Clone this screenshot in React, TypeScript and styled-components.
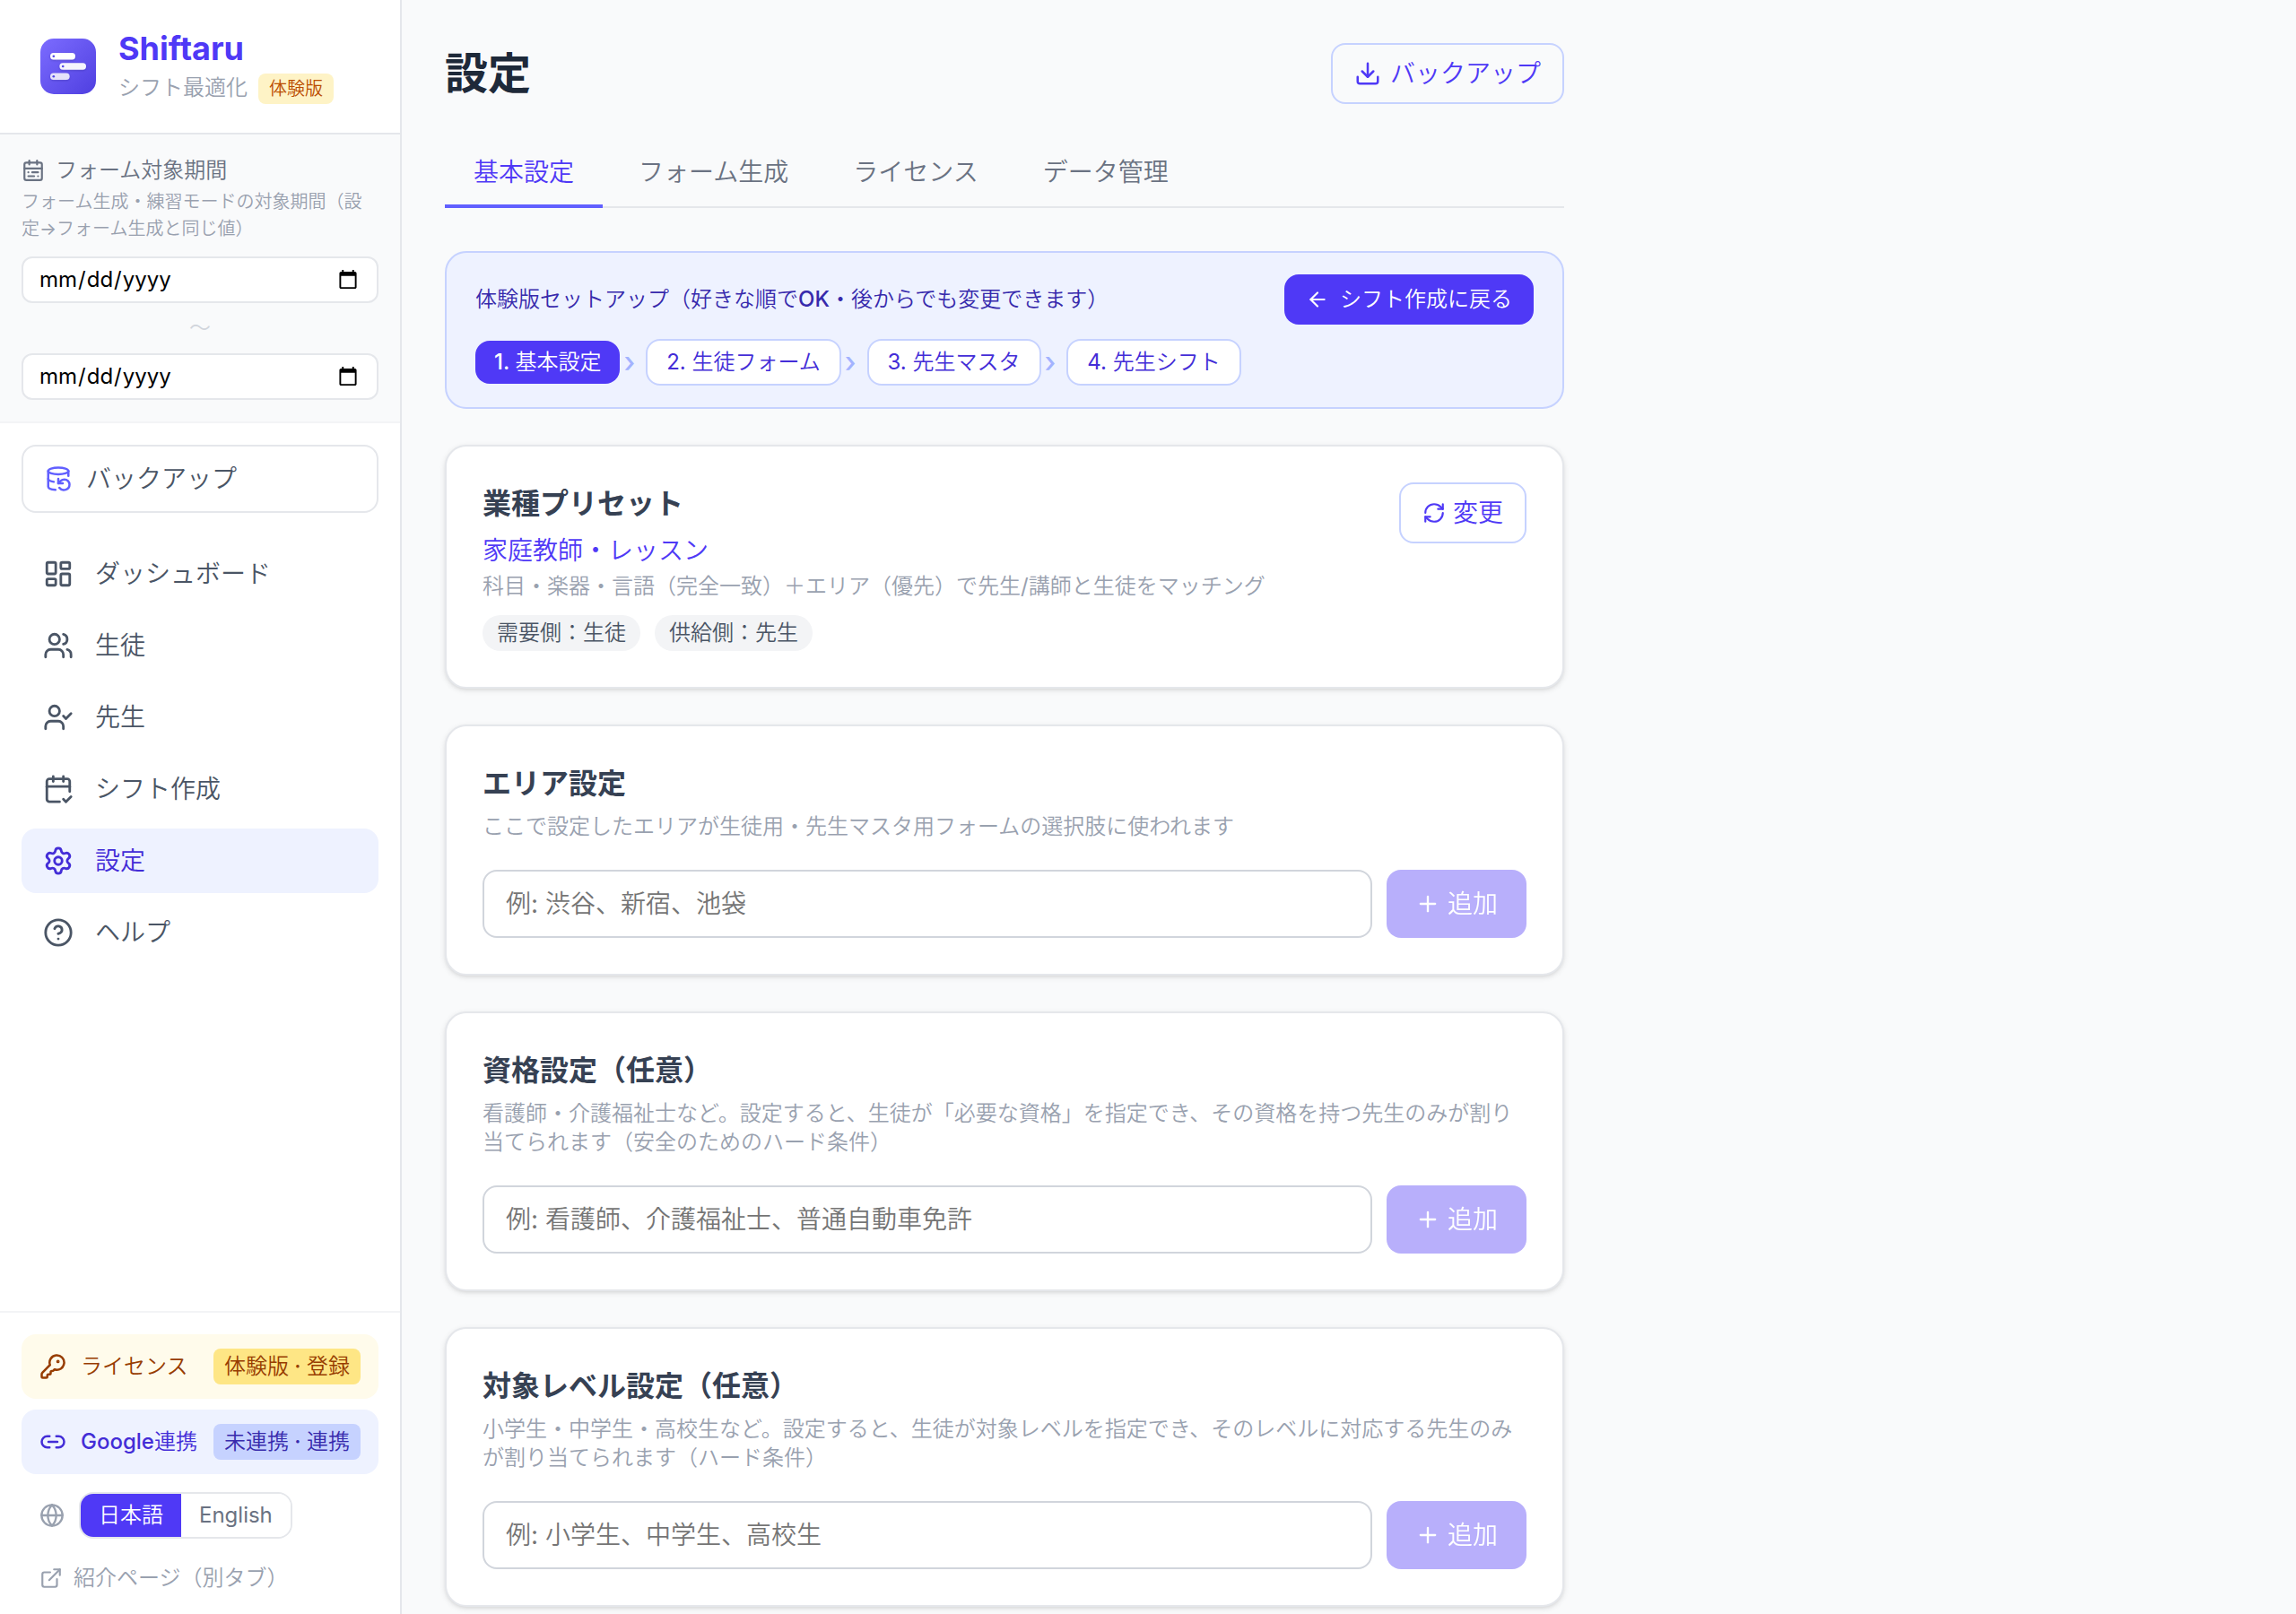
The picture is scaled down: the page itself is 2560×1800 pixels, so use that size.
import React from "react";
import styled, { createGlobalStyle, css } from "styled-components";
import {
  ArrowLeft,
  CalendarCheck2,
  CalendarRange,
  CircleHelp,
  DatabaseBackup,
  Download,
  ExternalLink,
  Globe,
  KeyRound,
  LayoutDashboard,
  Link2,
  Plus,
  RefreshCw,
  Settings,
} from "lucide-react";

const c = {
  page: "#f9fafb",
  line: "#e5e7eb",
  lineSoft: "#f3f4f6",
  lineInput: "#d1d5dc",
  faint: "#99a1af",
  muted: "#6a7282",
  body: "#4a5565",
  title: "#364153",
  heading: "#1e2939",
  indigo50: "#eef2ff",
  indigo200: "#c6d2ff",
  indigo300: "#a3b3ff",
  indigo500: "#615fff",
  indigo600: "#4f39f6",
  indigo700: "#432dd7",
  indigo800: "#372aac",
};

const fontText = `Inter, "Noto Sans CJK JP DemiLight", "Noto Sans CJK JP", sans-serif`;
const fontTitle = `Inter, "Noto Sans CJK JP", sans-serif`;

const Global = createGlobalStyle`
  *, *::before, *::after { box-sizing: border-box; }
  body {
    margin: 0;
    background: ${c.page};
    color: ${c.heading};
    font-family: ${fontText};
    font-size: 28px;
    line-height: 40px;
    -webkit-font-smoothing: antialiased;
  }
  h1, h2, p, ol, ul { margin: 0; padding: 0; }
  ol, ul { list-style: none; }
  button, input { font: inherit; margin: 0; }
  button { cursor: pointer; }
  a { color: inherit; text-decoration: none; }
  svg { display: block; flex: none; }
`;

const Shell = styled.div`
  display: flex;
  align-items: flex-start;
  min-height: 100vh;
`;

/* ---------- sidebar ---------- */

const Sidebar = styled.aside`
  position: sticky;
  top: 0;
  display: flex;
  flex-direction: column;
  flex: none;
  width: 448px;
  height: 100vh;
  background: #fff;
  border-right: 2px solid ${c.line};
`;

const Brand = styled.header`
  display: flex;
  align-items: center;
  gap: 20px;
  padding: 30px 40px;
  border-bottom: 2px solid ${c.line};
`;

const BrandName = styled.p`
  color: ${c.indigo600};
  font-size: 36px;
  font-weight: 700;
  line-height: 48px;
`;

const BrandSub = styled.p`
  display: flex;
  align-items: baseline;
  gap: 12px;
  color: ${c.faint};
  font-size: 24px;
  line-height: 40px;
`;

const TrialBadge = styled.span`
  padding: 2px 12px;
  border-radius: 8px;
  background: #fef3c6;
  color: #bb4d00;
  font-size: 20px;
  font-weight: 500;
  line-height: 30px;
`;

const Period = styled.section`
  padding: 24px;
  background: ${c.page};
  border-bottom: 2px solid ${c.lineSoft};
  font-size: 24px;
  line-height: 32px;
`;

const PeriodTitle = styled.p`
  display: flex;
  align-items: center;
  gap: 12px;
  color: ${c.muted};
  font-weight: 500;
`;

const PeriodNote = styled.p`
  margin: 4px 0 16px;
  color: ${c.faint};
  font-size: 20px;
  line-height: 30px;
`;

const DateInput = styled.input`
  display: block;
  width: 100%;
  height: 52px;
  padding: 8px 18px 8px 17px;
  border: 2px solid ${c.line};
  border-radius: 12px;
  background: #fff;
  color: #000;
  font-size: 24px;
  line-height: 32px;
`;

const Tilde = styled.p`
  padding: 12px 0;
  color: ${c.lineInput};
  text-align: center;
`;

const Nav = styled.nav`
  flex: 1;
  display: flex;
  flex-direction: column;
  gap: 32px;
  min-height: 0;
  padding: 24px;
`;

const BackupLink = styled.button`
  display: flex;
  align-items: center;
  gap: 16px;
  padding: 16px 24px;
  border: 2px solid ${c.line};
  border-radius: 16px;
  background: #fff;
  color: ${c.body};
  font-weight: 500;

  svg { color: ${c.indigo500}; }
`;

const NavList = styled.ul`
  display: flex;
  flex-direction: column;
  gap: 8px;
`;

const NavLink = styled.a<{ $active?: boolean }>`
  display: flex;
  align-items: center;
  gap: 24px;
  padding: 16px 24px;
  border-radius: 16px;
  font-weight: 500;
  color: ${(p) => (p.$active ? c.indigo700 : c.body)};
  background: ${(p) => (p.$active ? c.indigo50 : "transparent")};
`;

const Foot = styled.footer`
  display: flex;
  flex-direction: column;
  gap: 12px;
  padding: 24px 24px 16px;
  border-top: 2px solid ${c.lineSoft};
  font-size: 24px;
  line-height: 32px;
`;

type Tone = "amber" | "indigo";

const StatusLink = styled.a<{ $tone: Tone }>`
  display: flex;
  align-items: center;
  gap: 16px;
  padding: 16px 20px;
  border-radius: 16px;
  font-weight: 500;
  color: ${(p) => (p.$tone === "amber" ? "#973c00" : c.indigo700)};
  background: ${(p) => (p.$tone === "amber" ? "#fffbeb" : c.indigo50)};
`;

const StatusTag = styled.span<{ $tone: Tone }>`
  margin-left: auto;
  padding: 4px 12px;
  border-radius: 8px;
  white-space: nowrap;
  color: ${(p) => (p.$tone === "amber" ? "#973c00" : c.indigo800)};
  background: ${(p) => (p.$tone === "amber" ? "#fee685" : c.indigo200)};
`;

const LangRow = styled.div`
  display: flex;
  align-items: center;
  gap: 16px;
  padding: 8px 20px;
  color: ${c.faint};
`;

const LangToggle = styled.div`
  display: flex;
  overflow: hidden;
  border: 2px solid ${c.line};
  border-radius: 16px;
`;

const LangButton = styled.button<{ $active?: boolean }>`
  padding: 8px 20px;
  border: 0;
  font-weight: 400;
  color: ${(p) => (p.$active ? "#fff" : c.muted)};
  background: ${(p) => (p.$active ? c.indigo600 : "#fff")};
`;

const IntroLink = styled.a`
  display: flex;
  align-items: center;
  gap: 12px;
  padding: 8px 20px;
  color: ${c.faint};
`;

/* ---------- main ---------- */

const Main = styled.main`
  flex: 1;
  min-width: 0;
  padding: 48px 48px 8px;
`;

const Content = styled.div`
  display: flex;
  flex-direction: column;
  gap: 40px;
  max-width: 1248px;
`;

const PageHead = styled.header`
  display: flex;
  align-items: center;
  justify-content: space-between;
`;

const PageTitle = styled.h1`
  color: ${c.heading};
  font-family: ${fontTitle};
  font-size: 48px;
  font-weight: 700;
  line-height: 64px;
`;

const OutlineButton = styled.button<{ $gap: number }>`
  display: flex;
  align-items: center;
  flex: none;
  gap: ${(p) => p.$gap}px;
  padding: 12px 24px;
  border: 2px solid ${c.indigo200};
  border-radius: 16px;
  background: transparent;
  color: ${c.indigo600};
  font-weight: 500;
`;

const Tabs = styled.div`
  display: flex;
  gap: 8px;
  margin-bottom: 8px;
  box-shadow: inset 0 -2px ${c.line};
`;

const Tab = styled.button<{ $active?: boolean }>`
  padding: 16px 32px;
  border: 0;
  border-bottom: 4px solid ${(p) => (p.$active ? c.indigo500 : "transparent")};
  background: none;
  color: ${(p) => (p.$active ? c.indigo600 : c.muted)};
  font-weight: 500;
`;

const Setup = styled.section`
  display: flex;
  flex-direction: column;
  gap: 16px;
  padding: 24px 32px;
  border: 2px solid ${c.indigo200};
  border-radius: 24px;
  background: ${c.indigo50};
  font-size: 24px;
  line-height: 32px;
`;

const SetupHead = styled.div`
  display: flex;
  align-items: center;
  justify-content: space-between;
`;

const SetupTitle = styled.p`
  color: ${c.indigo800};
  font-weight: 500;
`;

const ReturnButton = styled.button`
  display: flex;
  align-items: center;
  gap: 12px;
  padding: 12px 24px;
  border: 0;
  border-radius: 16px;
  background: ${c.indigo600};
  color: #fff;
  font-weight: 500;
`;

const Steps = styled.ol`
  display: flex;
  align-items: center;
  gap: 12px;
`;

const Step = styled.li`
  display: flex;
  align-items: center;
  gap: 4px;
`;

const StepButton = styled.button<{ $active?: boolean }>`
  padding: 8px 21px;
  border-radius: 16px;
  ${(p) =>
    p.$active
      ? css`
          border: 0;
          background: ${c.indigo600};
          color: #fff;
          font-weight: 500;
        `
      : css`
          border: 2px solid ${c.indigo200};
          background: #fff;
          color: ${c.indigo700};
          font-weight: 400;
        `}
`;

const StepArrow = styled.span`
  color: ${c.indigo300};
  font-size: 32px;
  font-weight: 500;
`;

const Card = styled.section`
  padding: 40px;
  border: 2px solid ${c.line};
  border-radius: 24px;
  background: #fff;
  box-shadow: 0 2px 6px rgba(0, 0, 0, 0.1), 0 2px 4px -2px rgba(0, 0, 0, 0.1);
`;

const PresetCard = styled(Card)`
  display: flex;
  align-items: flex-start;
  justify-content: space-between;
  gap: 32px;
`;

const CardTitle = styled.h2`
  margin-bottom: 8px;
  color: ${c.title};
  font-family: ${fontTitle};
  font-size: 32px;
  font-weight: 700;
  line-height: 48px;
`;

const PresetName = styled.p`
  margin-bottom: 4px;
  color: ${c.indigo600};
  font-weight: 500;
`;

const CardNote = styled.p`
  color: ${c.faint};
  font-size: 24px;
  line-height: 32px;
`;

const Chips = styled.ul`
  display: flex;
  gap: 16px;
  margin-top: 16px;
`;

const Chip = styled.li`
  padding: 4px 16px;
  border-radius: 20px;
  background: ${c.lineSoft};
  color: ${c.body};
  font-size: 24px;
  line-height: 32px;
`;

const AddForm = styled.form`
  display: flex;
  gap: 16px;
  margin-top: 32px;
`;

const TextInput = styled.input`
  flex: 1;
  min-width: 0;
  padding: 16px 24px;
  border: 2px solid ${c.lineInput};
  border-radius: 16px;
  background: #fff;
  height: 76px;

  &::placeholder { color: #757575; }
`;

const AddButton = styled.button`
  display: flex;
  align-items: center;
  flex: none;
  gap: 8px;
  padding: 18px 32px;
  border: 0;
  border-radius: 16px;
  background: ${c.indigo600};
  color: #fff;
  font-weight: 500;

  &:disabled {
    opacity: 0.4;
    cursor: default;
  }
`;

function Logo() {
  return (
    <svg width="72" height="72" viewBox="0 0 72 72" aria-hidden="true">
      <defs>
        <linearGradient id="logo-fill" x1="0" y1="0" x2="1" y2="1">
          <stop offset="0" stopColor="#7c6cff" />
          <stop offset="1" stopColor="#4f3fe0" />
        </linearGradient>
        <filter id="logo-shadow" x="-20%" y="-20%" width="140%" height="160%">
          <feDropShadow dx="0" dy="1" stdDeviation="1" floodColor="#1e1b4b" floodOpacity="0.25" />
        </filter>
      </defs>
      <rect x="5" y="5" width="62" height="62" rx="15" fill="url(#logo-fill)" />
      <g fill="#fff" filter="url(#logo-shadow)">
        <rect x="16" y="21" width="28" height="7.4" rx="3.7" />
        <rect x="26.4" y="32.3" width="29.6" height="7.4" rx="3.7" opacity="0.93" />
        <rect x="16" y="43.6" width="21.6" height="7.4" rx="3.7" opacity="0.82" />
      </g>
      <g fill="#4f46e5">
        <circle cx="19.8" cy="24.7" r="1.3" />
        <circle cx="30.2" cy="36" r="1.3" />
        <circle cx="19.8" cy="47.3" r="1.3" />
      </g>
    </svg>
  );
}

type IconProps = { size?: number };

function LineIcon({ size = 24, children }: IconProps & { children: React.ReactNode }) {
  return (
    <svg
      width={size}
      height={size}
      viewBox="0 0 24 24"
      fill="none"
      stroke="currentColor"
      strokeWidth="2"
      strokeLinecap="round"
      strokeLinejoin="round"
      aria-hidden="true"
    >
      {children}
    </svg>
  );
}

function StudentsIcon({ size }: IconProps) {
  return (
    <LineIcon size={size}>
      <path d="M16 21v-2a4 4 0 0 0-4-4H6a4 4 0 0 0-4 4v2" />
      <path d="M16 3.128a4 4 0 0 1 0 7.744" />
      <path d="M22 21v-2a4 4 0 0 0-3-3.87" />
      <circle cx="9" cy="7" r="4" />
    </LineIcon>
  );
}

function TeacherIcon({ size }: IconProps) {
  return (
    <LineIcon size={size}>
      <path d="m16 11 2 2 4-4" />
      <path d="M16 21v-2a4 4 0 0 0-4-4H6a4 4 0 0 0-4 4v2" />
      <circle cx="9" cy="7" r="4" />
    </LineIcon>
  );
}

const navItems = [
  { label: "ダッシュボード", Icon: LayoutDashboard },
  { label: "生徒", Icon: StudentsIcon },
  { label: "先生", Icon: TeacherIcon },
  { label: "シフト作成", Icon: CalendarCheck2 },
  { label: "設定", Icon: Settings, active: true },
  { label: "ヘルプ", Icon: CircleHelp },
];

const tabs = ["基本設定", "フォーム生成", "ライセンス", "データ管理"];
const steps = ["1. 基本設定", "2. 生徒フォーム", "3. 先生マスタ", "4. 先生シフト"];

const listCards = [
  {
    id: "area",
    title: "エリア設定",
    note: "ここで設定したエリアが生徒用・先生マスタ用フォームの選択肢に使われます",
    placeholder: "例: 渋谷、新宿、池袋",
  },
  {
    id: "license",
    title: "資格設定（任意）",
    note: "看護師・介護福祉士など。設定すると、生徒が「必要な資格」を指定でき、その資格を持つ先生のみが割り当てられます（安全のためのハード条件）",
    placeholder: "例: 看護師、介護福祉士、普通自動車免許",
  },
  {
    id: "level",
    title: "対象レベル設定（任意）",
    note: "小学生・中学生・高校生など。設定すると、生徒が対象レベルを指定でき、そのレベルに対応する先生のみが割り当てられます（ハード条件）",
    placeholder: "例: 小学生、中学生、高校生",
  },
];

export default function App() {
  return (
    <>
      <Global />
      <Shell lang="ja">
        <Sidebar>
          <Brand>
            <Logo />
            <div>
              <BrandName>Shiftaru</BrandName>
              <BrandSub>
                シフト最適化
                <TrialBadge>体験版</TrialBadge>
              </BrandSub>
            </div>
          </Brand>

          <Period>
            <PeriodTitle>
              <CalendarRange size={26} />
              フォーム対象期間
            </PeriodTitle>
            <PeriodNote>フォーム生成・練習モードの対象期間（設定→フォーム生成と同じ値）</PeriodNote>
            <DateInput type="date" aria-label="開始日" />
            <Tilde>〜</Tilde>
            <DateInput type="date" aria-label="終了日" />
          </Period>

          <Nav>
            <BackupLink type="button">
              <DatabaseBackup size={30} />
              バックアップ
            </BackupLink>
            <NavList>
              {navItems.map(({ label, Icon, active }) => (
                <li key={label}>
                  <NavLink href="#" $active={active} aria-current={active ? "page" : undefined}>
                    <Icon size={34} />
                    {label}
                  </NavLink>
                </li>
              ))}
            </NavList>
          </Nav>

          <Foot>
            <StatusLink href="#" $tone="amber">
              <KeyRound size={30} />
              ライセンス
              <StatusTag $tone="amber">体験版 · 登録</StatusTag>
            </StatusLink>
            <StatusLink href="#" $tone="indigo">
              <Link2 size={30} />
              Google連携
              <StatusTag $tone="indigo">未連携 · 連携</StatusTag>
            </StatusLink>
            <LangRow>
              <Globe size={28} />
              <LangToggle>
                <LangButton type="button" $active>
                  日本語
                </LangButton>
                <LangButton type="button">English</LangButton>
              </LangToggle>
            </LangRow>
            <IntroLink href="#">
              <ExternalLink size={26} />
              紹介ページ（別タブ）
            </IntroLink>
          </Foot>
        </Sidebar>

        <Main>
          <Content>
            <PageHead>
              <PageTitle>設定</PageTitle>
              <OutlineButton type="button" $gap={10}>
                <Download size={30} />
                バックアップ
              </OutlineButton>
            </PageHead>

            <Tabs role="tablist">
              {tabs.map((label, i) => (
                <Tab key={label} type="button" role="tab" aria-selected={i === 0} $active={i === 0}>
                  {label}
                </Tab>
              ))}
            </Tabs>

            <Setup>
              <SetupHead>
                <SetupTitle>体験版セットアップ（好きな順でOK・後からでも変更できます）</SetupTitle>
                <ReturnButton type="button">
                  <ArrowLeft size={26} />
                  シフト作成に戻る
                </ReturnButton>
              </SetupHead>
              <Steps>
                {steps.map((label, i) => (
                  <Step key={label}>
                    <StepButton type="button" $active={i === 0}>
                      {label}
                    </StepButton>
                    {i < steps.length - 1 && <StepArrow aria-hidden="true">›</StepArrow>}
                  </Step>
                ))}
              </Steps>
            </Setup>

            <PresetCard>
              <div>
                <CardTitle>業種プリセット</CardTitle>
                <PresetName>家庭教師・レッスン</PresetName>
                <CardNote>科目・楽器・言語（完全一致）＋エリア（優先）で先生/講師と生徒をマッチング</CardNote>
                <Chips>
                  <Chip>需要側：生徒</Chip>
                  <Chip>供給側：先生</Chip>
                </Chips>
              </div>
              <OutlineButton type="button" $gap={8}>
                <RefreshCw size={26} />
                変更
              </OutlineButton>
            </PresetCard>

            {listCards.map((card) => (
              <Card key={card.id}>
                <CardTitle>{card.title}</CardTitle>
                <CardNote>{card.note}</CardNote>
                <AddForm>
                  <TextInput type="text" aria-label={card.title} placeholder={card.placeholder} />
                  <AddButton type="submit" disabled>
                    <Plus size={28} />
                    追加
                  </AddButton>
                </AddForm>
              </Card>
            ))}
          </Content>
        </Main>
      </Shell>
    </>
  );
}
